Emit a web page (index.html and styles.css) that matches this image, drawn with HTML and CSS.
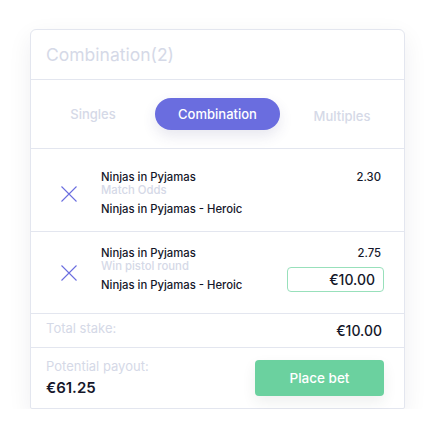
FILE: index.html
```html
<!DOCTYPE html>
<html lang="en">
<head>
    <meta charset="UTF-8">
    <meta name="viewport" content="width=device-width, initial-scale=1.0">
    <title>Bet Slip</title>
    <link rel="stylesheet" href="styles.css">
</head>
<body>
    <div class="slip">
        <div class="slip-header">Combination(2)</div>

        <div class="tabs">
            <div class="tab">Singles</div>
            <div class="tab"><span class="pill">Combination</span></div>
            <div class="tab tab-low">Multiples</div>
        </div>

        <div class="bet bet-first">
            <div class="remove">
                <svg width="16" height="16" viewBox="0 0 16 16"><path d="M0.5 0.5 L15.5 15.5 M15.5 0.5 L0.5 15.5" stroke="#6a6ddf" stroke-width="1.1" fill="none"/></svg>
            </div>
            <div class="bet-info">
                <div class="bet-name">Ninjas in Pyjamas</div>
                <div class="bet-market">Match Odds</div>
                <div class="bet-pick">Ninjas in Pyjamas - Heroic</div>
            </div>
            <div class="bet-side">
                <div class="bet-odds">2.30</div>
            </div>
        </div>

        <div class="bet bet-second">
            <div class="remove">
                <svg width="16" height="16" viewBox="0 0 16 16"><path d="M0.5 0.5 L15.5 15.5 M15.5 0.5 L0.5 15.5" stroke="#6a6ddf" stroke-width="1.1" fill="none"/></svg>
            </div>
            <div class="bet-info">
                <div class="bet-name">Ninjas in Pyjamas</div>
                <div class="bet-market">Win pistol round</div>
                <div class="bet-pick">Ninjas in Pyjamas - Heroic</div>
            </div>
            <div class="bet-side">
                <div class="bet-odds">2.75</div>
                <div class="stake-input">€10.00</div>
            </div>
        </div>

        <div class="total">
            <span class="muted">Total stake:</span>
            <span class="total-value">€10.00</span>
        </div>

        <div class="payout">
            <div>
                <div class="muted">Potential payout:</div>
                <div class="payout-value">€61.25</div>
            </div>
            <button class="place-bet">Place bet</button>
        </div>
    </div>
</body>
</html>
```

FILE: styles.css
```css
body {
    margin: 0;
    background: #fff;
    font-family: Inter, "Noto Sans", sans-serif;
    color: #15172a;
}

.slip {
    margin: 29px 0 0 30px;
    width: 373px;
    border: 1px solid #e3e6ef;
    border-radius: 6px 6px 2px 2px;
    box-shadow: 0 8px 24px rgba(30, 35, 60, 0.07);
    background: #fff;
}

.slip-header {
    height: 49px;
    line-height: 50px;
    padding-left: 15px;
    font-size: 17.5px;
    color: #d5d9e7;
    border-bottom: 1px solid #e3e6ef;
}

.tabs {
    display: flex;
    justify-content: center;
    height: 68px;
    border-bottom: 1px solid #e3e6ef;
}

.tab {
    width: 125px;
    height: 32px;
    margin-top: 18px;
    display: flex;
    justify-content: center;
    align-items: center;
    font-size: 13px;
    font-weight: 500;
    color: #d5d9e7;
}

.tab-low {
    padding-top: 2px;
}

.pill {
    width: 131px;
    height: 32px;
    line-height: 32px;
    text-align: center;
    border-radius: 16px;
    background: #6a6ddf;
    color: #fff;
    box-shadow: 0 6px 14px rgba(60, 60, 120, 0.12);
}

.bet {
    display: flex;
    border-bottom: 1px solid #e3e6ef;
    font-size: 11.3px;
    font-weight: 500;
}

.bet-first {
    height: 82px;
}

.bet-second {
    height: 81px;
}

.remove {
    width: 70px;
    display: flex;
    align-items: center;
    padding-left: 30px;
    box-sizing: border-box;
}

.bet-first .remove {
    padding-top: 7px;
}

.bet-info {
    flex: 1;
}

.bet-first .bet-info,
.bet-first .bet-side {
    padding-top: 22px;
}

.bet-second .bet-info,
.bet-second .bet-side {
    padding-top: 15px;
}

.bet-name,
.bet-market,
.bet-pick,
.bet-odds {
    line-height: 13px;
}

.bet-market {
    color: #d5d9e7;
}

.bet-pick {
    margin-top: 6px;
}

.bet-side {
    display: flex;
    flex-direction: column;
    align-items: flex-end;
    padding-right: 22px;
}

.bet-odds {
    margin-right: 1px;
}

.stake-input {
    margin-top: 7px;
    margin-right: -2px;
    width: 97px;
    height: 25px;
    box-sizing: border-box;
    border: 1px solid #98e0bb;
    border-radius: 4px;
    text-align: right;
    padding-right: 8px;
    line-height: 23px;
    font-size: 14px;
}

.total {
    display: flex;
    justify-content: space-between;
    height: 33px;
    padding: 0 22px 0 15px;
    border-bottom: 1px solid #e3e6ef;
    line-height: 33px;
}

.muted {
    font-size: 13px;
    color: #d5d9e7;
}

.total .muted {
    margin-top: -2px;
}

.total-value {
    font-size: 14px;
    font-weight: 500;
}

.payout {
    display: flex;
    justify-content: space-between;
    height: 60px;
    padding: 10px 20px 0 15px;
    box-sizing: border-box;
}

.payout-value {
    margin-top: 4px;
    font-size: 15px;
    font-weight: 600;
}

.place-bet {
    margin-top: 2px;
    width: 129px;
    height: 36px;
    border: none;
    border-radius: 4px;
    background: #6bd19f;
    color: #fff;
    font-family: inherit;
    font-size: 13.5px;
    font-weight: 500;
    box-shadow: 0 6px 14px rgba(40, 60, 50, 0.08);
}
```
